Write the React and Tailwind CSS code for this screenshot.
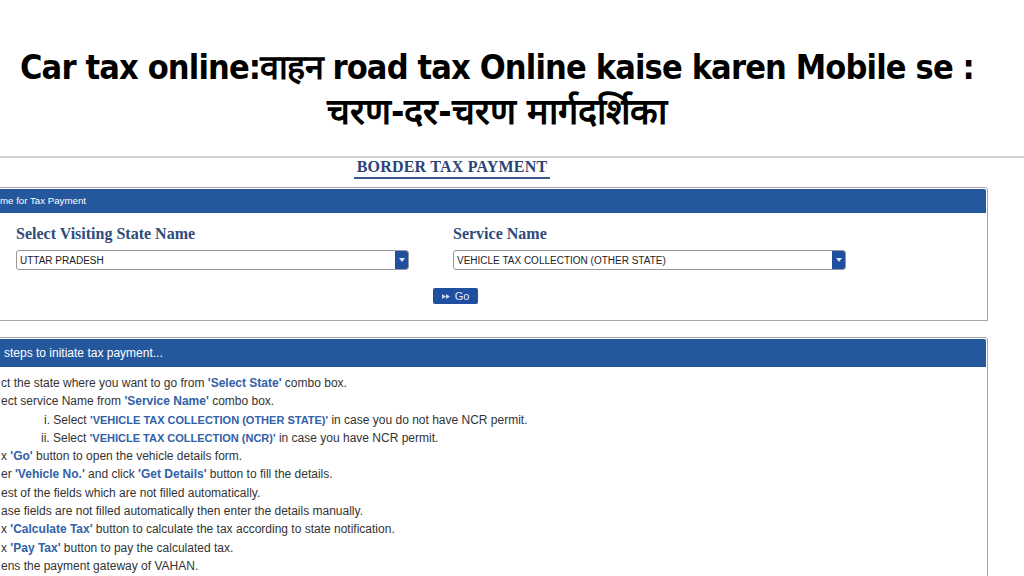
import React from "react";

const Hl = ({ children }) => (
  <span className="text-[12px] font-bold text-[#3161a8]">{children}</span>
);

const HlCaps = ({ children }) => (
  <span className="text-[11px] font-bold text-[#3161a8]">{children}</span>
);

const SelectBox = ({ value }) => (
  <div className="flex h-[20px] w-[393px] items-stretch rounded-[3px] border border-[#9a9a9a] bg-white">
    <div className="flex flex-1 items-center pl-[3px] text-[10px] text-[#222] font-['Liberation_Sans',Arial,sans-serif]">
      {value}
    </div>
    <div className="flex w-[13px] items-center justify-center rounded-r-[2px] bg-[#1f4f9e]">
      <svg width="6" height="4" viewBox="0 0 6 4">
        <path d="M0 0 L6 0 L3 4 Z" fill="#dfe8f5" />
      </svg>
    </div>
  </div>
);

const steps = [
  { pad: 0, text: <>ct the state where you want to go from <Hl>'Select State'</Hl> combo box.</> },
  { pad: 0, text: <>ect service Name from <Hl>'Service Name'</Hl> combo box.</> },
  { pad: 43, text: <>i. Select <HlCaps>'VEHICLE TAX COLLECTION (OTHER STATE)'</HlCaps> in case you do not have NCR permit.</> },
  { pad: 40, text: <>ii. Select <HlCaps>'VEHICLE TAX COLLECTION (NCR)'</HlCaps> in case you have NCR permit.</> },
  { pad: 0, text: <>x <Hl>'Go'</Hl> button to open the vehicle details form.</> },
  { pad: 0, text: <>er <Hl>'Vehicle No.'</Hl> and click <Hl>'Get Details'</Hl> button to fill the details.</> },
  { pad: 0, text: <>est of the fields which are not filled automatically.</> },
  { pad: 0, text: <>ase fields are not filled automatically then enter the details manually.</> },
  { pad: 0, text: <>x <Hl>'Calculate Tax'</Hl> button to calculate the tax according to state notification.</> },
  { pad: 0, text: <>x <Hl>'Pay Tax'</Hl> button to pay the calculated tax.</> },
  { pad: 0, text: <>ens the payment gateway of VAHAN.</> },
];

export default function App() {
  return (
    <div className="h-[576px] w-[1024px] overflow-hidden bg-white">
      {/* headline */}
      <div className="flex h-[156px] flex-col items-center pr-[30px] pt-[45px] text-black font-['Liberation_Sans_Narrow','DejaVu_Sans_Condensed',Roboto,sans-serif] font-bold">
        <h1 className="text-[34px] leading-[44px] tracking-[-0.85px]">
          Car tax online:वाहन road tax Online kaise karen Mobile se :
        </h1>
        <h2 className="text-[36px] leading-[46px]">चरण-दर-चरण मार्गदर्शिका</h2>
      </div>

      <div className="border-t-2 border-[#d4d4d4]" />

      {/* screenshot of the VAHAN page */}
      <div className="ml-[-84px] w-[1072px] font-['Liberation_Sans',Arial,sans-serif]">
        <div className="flex justify-center">
          <div className="border-b-2 border-[#3b5a8c] px-[3px] pb-[1px] text-[16px] leading-[18px] font-bold tracking-[0.2px] text-[#2b4477] font-['Liberation_Serif','Times_New_Roman',serif]">
            BORDER TAX PAYMENT
          </div>
        </div>

        <div className="mt-[8px] rounded-t-[3px] border border-[#a5a5a5] p-[1px]">
          <div className="flex h-[24px] items-center rounded-t-[2px] bg-[#24579c] pl-[82px] text-[9.7px] text-white">
            me for Tax Payment
          </div>
          <div className="flex gap-[44px] pl-[98px] pt-[11px]">
            <div className="flex flex-col gap-[6px]">
              <div className="text-[16px] leading-[20px] font-bold text-[#2e4b7c] font-['Liberation_Serif',Georgia,serif]">
                Select Visiting State Name
              </div>
              <SelectBox value="UTTAR PRADESH" />
            </div>
            <div className="flex flex-col gap-[6px]">
              <div className="text-[16px] leading-[20px] font-bold text-[#2e4b7c] font-['Liberation_Serif',Georgia,serif]">
                Service Name
              </div>
              <SelectBox value="VEHICLE TAX COLLECTION (OTHER STATE)" />
            </div>
          </div>
          <div className="flex justify-center pb-[15px] pl-[7px] pt-[18px]">
            <button className="flex h-[16px] items-center gap-[5px] rounded-[2px] bg-[#1f4fa0] px-[9px] text-[11px] text-[#e6edf7]">
              <svg width="8" height="5" viewBox="0 0 8 5">
                <path d="M0 0 L4 2.5 L0 5 Z M4 0 L8 2.5 L4 5 Z" fill="#c9d6ec" />
              </svg>
              Go
            </button>
          </div>
        </div>

        <div className="mt-[16px] h-[300px] rounded-t-[3px] border border-[#a5a5a5] p-[1px]">
          <div className="flex h-[28px] items-center rounded-t-[2px] bg-[#24579c] pl-[86px] text-[12px] text-white">
            steps to initiate tax payment...
          </div>
          <div className="flex flex-col pt-[7px] text-[12px] leading-[18.3px] text-[#333]">
            {steps.map((s, i) => (
              <div key={i} style={{ paddingLeft: 83 + s.pad }}>
                {s.text}
              </div>
            ))}
          </div>
        </div>
      </div>
    </div>
  );
}
